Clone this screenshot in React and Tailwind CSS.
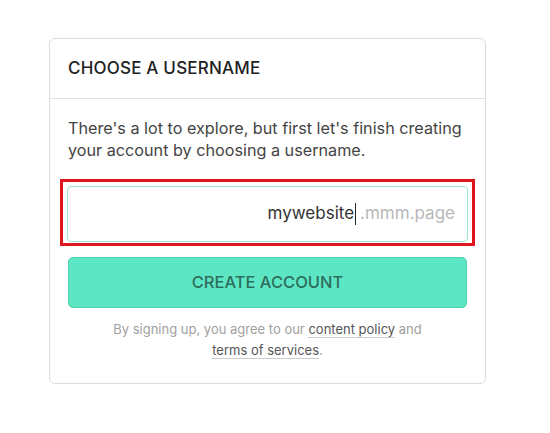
export default function App() {
  return (
    <div className="min-h-screen bg-white pt-[38px] font-['Inter',sans-serif]">
      <div className="ml-[49px] w-[437px] h-[346px] rounded-[6px] border border-[#dcdcdc] bg-white">
        <div className="h-[60px] border-b border-[#e2e2e2] px-[18px] flex items-center">
          <h1 className="text-[17px] font-medium text-[#222] tracking-[0.2px]">
            CHOOSE A USERNAME
          </h1>
        </div>

        <div className="px-[18px] pt-[18px]">
          <p className="text-[16.2px] leading-[22px] text-[#444]">
            There's a lot to explore, but first let's finish creating your
            account by choosing a username.
          </p>

          <div className="mt-[18px] -mx-[8px] border-[3px] border-[#e0161e] pt-[4px] pb-px px-[4px]">
            <div className="h-[56px] rounded-[4px] border border-[#9fe3d3] bg-white flex items-center justify-end pr-[12px]">
              <span className="text-[17px] text-[#333]">mywebsite</span>
              <span className="w-px h-[22px] bg-[#222] ml-px mr-[4px]" />
              <span className="text-[17px] text-[#b8b8b8]">.mmm.page</span>
            </div>
          </div>

          <button
            type="button"
            className="mt-[11px] w-full h-[51px] rounded-[5px] border border-[#4ccfae] bg-[#5de6c4] text-[16.5px] font-medium text-[#2d6f5d]"
          >
            CREATE ACCOUNT
          </button>

          <p className="mt-[11px] text-center text-[13px] leading-[21px] text-[#a0a0a0]">
            By signing up, you agree to our{" "}
            <a className="text-[#555] border-b border-[#ccc]" href="#">
              content policy
            </a>{" "}
            and
            <br />
            <a className="text-[#555] border-b border-[#ccc]" href="#">
              terms of services
            </a>
            .
          </p>
        </div>
      </div>
    </div>
  );
}
